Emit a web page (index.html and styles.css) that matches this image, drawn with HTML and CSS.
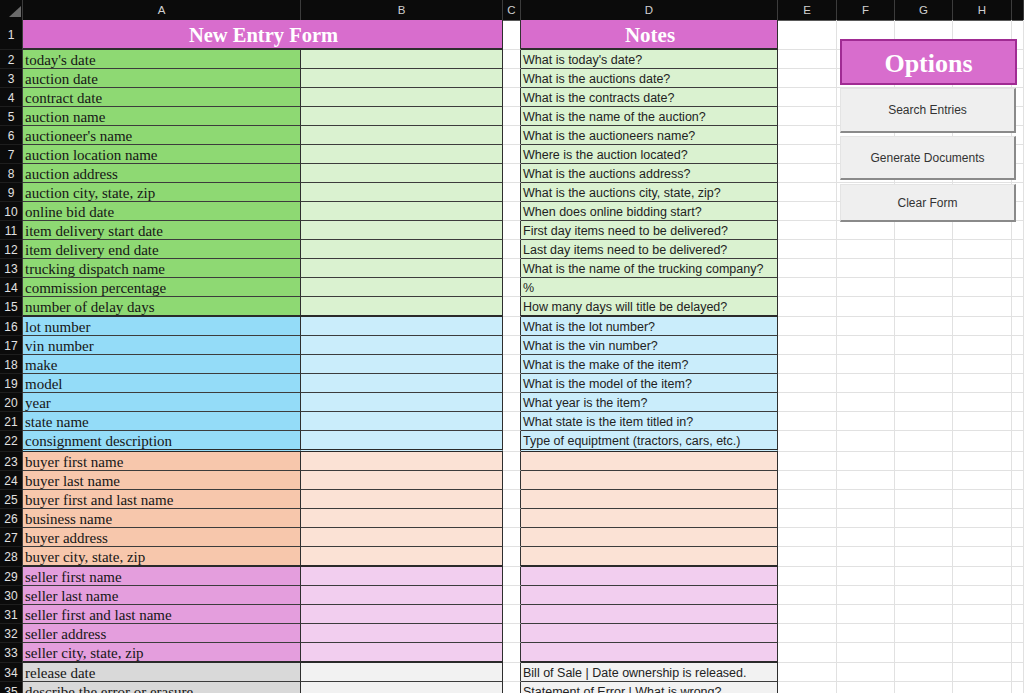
FILE: index.html
```html
<!DOCTYPE html>
<html>
<head>
<meta charset="utf-8">
<title>New Entry Form</title>
<link rel="stylesheet" href="styles.css">
</head>
<body>
<div class="sheet">
  <div class="hdr">
    <div class="corner"><svg width="22" height="19" viewBox="0 0 22 19"><polygon points="9,17 21,17 21,6" fill="#6b6b6b"/></svg></div>
    <div>A</div><div>B</div><div>C</div><div>D</div><div>E</div><div>F</div><div>G</div><div>H</div><div></div>
  </div>

  <div class="row r1">
    <div class="rh">1</div>
    <div class="c title">New Entry Form</div>
    <div class="c cc"></div>
    <div class="c ntitle">Notes</div>
    <div class="c"></div><div class="c"></div><div class="c"></div><div class="c"></div><div class="c"></div>
  </div>

  <div class="row g"><div class="rh">2</div><div class="c la">today's date</div><div class="c lb"></div><div class="c cc"></div><div class="c ld">What is today's date?</div><div class="c"></div><div class="c"></div><div class="c"></div><div class="c"></div><div class="c"></div></div>
  <div class="row g"><div class="rh">3</div><div class="c la">auction date</div><div class="c lb"></div><div class="c cc"></div><div class="c ld">What is the auctions date?</div><div class="c"></div><div class="c"></div><div class="c"></div><div class="c"></div><div class="c"></div></div>
  <div class="row g"><div class="rh">4</div><div class="c la">contract date</div><div class="c lb"></div><div class="c cc"></div><div class="c ld">What is the contracts date?</div><div class="c"></div><div class="c"></div><div class="c"></div><div class="c"></div><div class="c"></div></div>
  <div class="row g"><div class="rh">5</div><div class="c la">auction name</div><div class="c lb"></div><div class="c cc"></div><div class="c ld">What is the name of the auction?</div><div class="c"></div><div class="c"></div><div class="c"></div><div class="c"></div><div class="c"></div></div>
  <div class="row g"><div class="rh">6</div><div class="c la">auctioneer's name</div><div class="c lb"></div><div class="c cc"></div><div class="c ld">What is the auctioneers name?</div><div class="c"></div><div class="c"></div><div class="c"></div><div class="c"></div><div class="c"></div></div>
  <div class="row g"><div class="rh">7</div><div class="c la">auction location name</div><div class="c lb"></div><div class="c cc"></div><div class="c ld">Where is the auction located?</div><div class="c"></div><div class="c"></div><div class="c"></div><div class="c"></div><div class="c"></div></div>
  <div class="row g"><div class="rh">8</div><div class="c la">auction address</div><div class="c lb"></div><div class="c cc"></div><div class="c ld">What is the auctions address?</div><div class="c"></div><div class="c"></div><div class="c"></div><div class="c"></div><div class="c"></div></div>
  <div class="row g"><div class="rh">9</div><div class="c la">auction city, state, zip</div><div class="c lb"></div><div class="c cc"></div><div class="c ld">What is the auctions city, state, zip?</div><div class="c"></div><div class="c"></div><div class="c"></div><div class="c"></div><div class="c"></div></div>
  <div class="row g"><div class="rh">10</div><div class="c la">online bid date</div><div class="c lb"></div><div class="c cc"></div><div class="c ld">When does online bidding start?</div><div class="c"></div><div class="c"></div><div class="c"></div><div class="c"></div><div class="c"></div></div>
  <div class="row g"><div class="rh">11</div><div class="c la">item delivery start date</div><div class="c lb"></div><div class="c cc"></div><div class="c ld">First day items need to be delivered?</div><div class="c"></div><div class="c"></div><div class="c"></div><div class="c"></div><div class="c"></div></div>
  <div class="row g"><div class="rh">12</div><div class="c la">item delivery end date</div><div class="c lb"></div><div class="c cc"></div><div class="c ld">Last day items need to be delivered?</div><div class="c"></div><div class="c"></div><div class="c"></div><div class="c"></div><div class="c"></div></div>
  <div class="row g"><div class="rh">13</div><div class="c la">trucking dispatch name</div><div class="c lb"></div><div class="c cc"></div><div class="c ld">What is the name of the trucking company?</div><div class="c"></div><div class="c"></div><div class="c"></div><div class="c"></div><div class="c"></div></div>
  <div class="row g"><div class="rh">14</div><div class="c la">commission percentage</div><div class="c lb"></div><div class="c cc"></div><div class="c ld">%</div><div class="c"></div><div class="c"></div><div class="c"></div><div class="c"></div><div class="c"></div></div>
  <div class="row g end"><div class="rh">15</div><div class="c la">number of delay days</div><div class="c lb"></div><div class="c cc"></div><div class="c ld">How many days will title be delayed?</div><div class="c"></div><div class="c"></div><div class="c"></div><div class="c"></div><div class="c"></div></div>

  <div class="row b"><div class="rh">16</div><div class="c la">lot number</div><div class="c lb"></div><div class="c cc"></div><div class="c ld">What is the lot number?</div><div class="c"></div><div class="c"></div><div class="c"></div><div class="c"></div><div class="c"></div></div>
  <div class="row b"><div class="rh">17</div><div class="c la">vin number</div><div class="c lb"></div><div class="c cc"></div><div class="c ld">What is the vin number?</div><div class="c"></div><div class="c"></div><div class="c"></div><div class="c"></div><div class="c"></div></div>
  <div class="row b"><div class="rh">18</div><div class="c la">make</div><div class="c lb"></div><div class="c cc"></div><div class="c ld">What is the make of the item?</div><div class="c"></div><div class="c"></div><div class="c"></div><div class="c"></div><div class="c"></div></div>
  <div class="row b"><div class="rh">19</div><div class="c la">model</div><div class="c lb"></div><div class="c cc"></div><div class="c ld">What is the model of the item?</div><div class="c"></div><div class="c"></div><div class="c"></div><div class="c"></div><div class="c"></div></div>
  <div class="row b"><div class="rh">20</div><div class="c la">year</div><div class="c lb"></div><div class="c cc"></div><div class="c ld">What year is the item?</div><div class="c"></div><div class="c"></div><div class="c"></div><div class="c"></div><div class="c"></div></div>
  <div class="row b"><div class="rh">21</div><div class="c la">state name</div><div class="c lb"></div><div class="c cc"></div><div class="c ld">What state is the item titled in?</div><div class="c"></div><div class="c"></div><div class="c"></div><div class="c"></div><div class="c"></div></div>
  <div class="row b end wide"><div class="rh">22</div><div class="c la">consignment description</div><div class="c lb"></div><div class="c cc"></div><div class="c ld">Type of equiptment (tractors, cars, etc.)</div><div class="c"></div><div class="c"></div><div class="c"></div><div class="c"></div><div class="c"></div></div>

  <div class="row o"><div class="rh">23</div><div class="c la">buyer first name</div><div class="c lb"></div><div class="c cc"></div><div class="c ld"></div><div class="c"></div><div class="c"></div><div class="c"></div><div class="c"></div><div class="c"></div></div>
  <div class="row o"><div class="rh">24</div><div class="c la">buyer last name</div><div class="c lb"></div><div class="c cc"></div><div class="c ld"></div><div class="c"></div><div class="c"></div><div class="c"></div><div class="c"></div><div class="c"></div></div>
  <div class="row o"><div class="rh">25</div><div class="c la">buyer first and last name</div><div class="c lb"></div><div class="c cc"></div><div class="c ld"></div><div class="c"></div><div class="c"></div><div class="c"></div><div class="c"></div><div class="c"></div></div>
  <div class="row o"><div class="rh">26</div><div class="c la">business name</div><div class="c lb"></div><div class="c cc"></div><div class="c ld"></div><div class="c"></div><div class="c"></div><div class="c"></div><div class="c"></div><div class="c"></div></div>
  <div class="row o"><div class="rh">27</div><div class="c la">buyer address</div><div class="c lb"></div><div class="c cc"></div><div class="c ld"></div><div class="c"></div><div class="c"></div><div class="c"></div><div class="c"></div><div class="c"></div></div>
  <div class="row o end"><div class="rh">28</div><div class="c la">buyer city, state, zip</div><div class="c lb"></div><div class="c cc"></div><div class="c ld"></div><div class="c"></div><div class="c"></div><div class="c"></div><div class="c"></div><div class="c"></div></div>

  <div class="row p"><div class="rh">29</div><div class="c la">seller first name</div><div class="c lb"></div><div class="c cc"></div><div class="c ld"></div><div class="c"></div><div class="c"></div><div class="c"></div><div class="c"></div><div class="c"></div></div>
  <div class="row p"><div class="rh">30</div><div class="c la">seller last name</div><div class="c lb"></div><div class="c cc"></div><div class="c ld"></div><div class="c"></div><div class="c"></div><div class="c"></div><div class="c"></div><div class="c"></div></div>
  <div class="row p"><div class="rh">31</div><div class="c la">seller first and last name</div><div class="c lb"></div><div class="c cc"></div><div class="c ld"></div><div class="c"></div><div class="c"></div><div class="c"></div><div class="c"></div><div class="c"></div></div>
  <div class="row p"><div class="rh">32</div><div class="c la">seller address</div><div class="c lb"></div><div class="c cc"></div><div class="c ld"></div><div class="c"></div><div class="c"></div><div class="c"></div><div class="c"></div><div class="c"></div></div>
  <div class="row p end"><div class="rh">33</div><div class="c la">seller city, state, zip</div><div class="c lb"></div><div class="c cc"></div><div class="c ld"></div><div class="c"></div><div class="c"></div><div class="c"></div><div class="c"></div><div class="c"></div></div>

  <div class="row k"><div class="rh">34</div><div class="c la">release date</div><div class="c lb"></div><div class="c cc"></div><div class="c ld">Bill of Sale | Date ownership is released.</div><div class="c"></div><div class="c"></div><div class="c"></div><div class="c"></div><div class="c"></div></div>
  <div class="row k"><div class="rh">35</div><div class="c la">describe the error or erasure</div><div class="c lb"></div><div class="c cc"></div><div class="c ld">Statement of Error | What is wrong?</div><div class="c"></div><div class="c"></div><div class="c"></div><div class="c"></div><div class="c"></div></div>

  <div class="panel">
    <div class="opts">Options</div>
    <div class="btn btn-a">Search Entries</div>
    <div class="btn btn-b">Generate Documents</div>
    <div class="btn btn-c">Clear Form</div>
  </div>
</div>
</body>
</html>
```

FILE: styles.css
```css
html, body {
  margin: 0;
  padding: 0;
  width: 1024px;
  height: 693px;
  overflow: hidden;
  background: #ffffff;
  font-family: "Liberation Sans", Arial, sans-serif;
}

.sheet {
  position: relative;
  width: 1024px;
}

.hdr, .row {
  display: grid;
  grid-template-columns: 23px 278px 202px 18px 257px 59px 58px 58px 59px 1fr;
}

.hdr {
  height: 20px;
  background: #0b0b0b;
}

.hdr > div {
  box-sizing: border-box;
  border-right: 1px solid #3c3c3c;
  border-bottom: 1px solid #5a5a5a;
  color: #d0d0d0;
  font-size: 11.5px;
  line-height: 20px;
  text-align: center;
}

.hdr .corner {
  padding: 0;
  line-height: 0;
}

.row {
  height: 19px;
}

.row.r1 {
  height: 30px;
}

.row.r1 .title {
  grid-column: span 2;
}

.row.end {
  height: 20px;
}

.row.end.wide {
  height: 21px;
}

.rh {
  box-sizing: border-box;
  background: #0b0b0b;
  color: #e2e2e2;
  font-size: 12px;
  line-height: 20px;
  text-align: center;
  overflow: hidden;
  border-right: 1px solid #3c3c3c;
  border-bottom: 1px solid #1e1e1e;
}

.r1 .rh {
  line-height: 30px;
}

.c {
  box-sizing: border-box;
  border-right: 1px solid #e1e1e1;
  border-bottom: 1px solid #e1e1e1;
  overflow: hidden;
  white-space: nowrap;
  padding-left: 2px;
  line-height: 20px;
}

.c.cc {
  border-right: 1px solid #333333;
}

.title, .ntitle {
  background: #d86dcd;
  color: #ffffff;
  font-family: "Liberation Serif", "Times New Roman", serif;
  font-weight: bold;
  text-align: center;
  border-bottom: 2px solid #2e2e2e;
  border-right: 1px solid #2e2e2e;
}

.c.title, .c.ntitle {
  line-height: 30px;
}

.title {
  font-size: 20.5px;
}

.ntitle {
  font-size: 21px;
}

.la, .lb, .ld {
  border-right: 1px solid #2e2e2e;
  border-bottom: 1px solid #3c3c3c;
}

.la {
  font-family: "Liberation Serif", "Times New Roman", serif;
  font-size: 15px;
  color: #161616;
}

.ld {
  font-size: 12.5px;
  color: #222222;
}

.end .la, .end .lb, .end .ld {
  border-bottom: 2px solid #2a2a2a;
}

.wide .la, .wide .lb, .wide .ld {
  border-bottom: 3px double #2a2a2a;
}

.g .la { background: #8ed973; }
.g .lb, .g .ld { background: #daf2d0; }

.b .la { background: #94dcf8; }
.b .lb, .b .ld { background: #caedfb; }

.o .la { background: #f7c7ac; }
.o .lb, .o .ld { background: #fbe2d5; }

.p .la { background: #e49edd; }
.p .lb, .p .ld { background: #f2ceef; }

.k .la { background: #d9d9d9; }
.k .lb, .k .ld { background: #f2f2f2; }

.panel {
  position: absolute;
  left: 840px;
  top: 39px;
  width: 177px;
  display: flex;
  flex-direction: column;
  gap: 3px;
}

.opts {
  box-sizing: border-box;
  height: 46px;
  padding-top: 3px;
  background: #d86dcd;
  border: 2px solid #a02b93;
  color: #ffffff;
  font-family: "Liberation Serif", "Times New Roman", serif;
  font-weight: bold;
  font-size: 26px;
  display: flex;
  align-items: center;
  justify-content: center;
}

.btn {
  box-sizing: border-box;
  width: 176px;
  background: #efefef;
  border-top: 1px solid #e4e4e4;
  border-left: 1px solid #e4e4e4;
  border-right: 2px solid #8a8a8a;
  border-bottom: 2px solid #8a8a8a;
  color: #333333;
  font-size: 12px;
  display: flex;
  align-items: center;
  justify-content: center;
}

.btn-a { height: 45px; }
.btn-b { height: 44px; }
.btn-c { height: 38px; margin-top: 1px; }
```
